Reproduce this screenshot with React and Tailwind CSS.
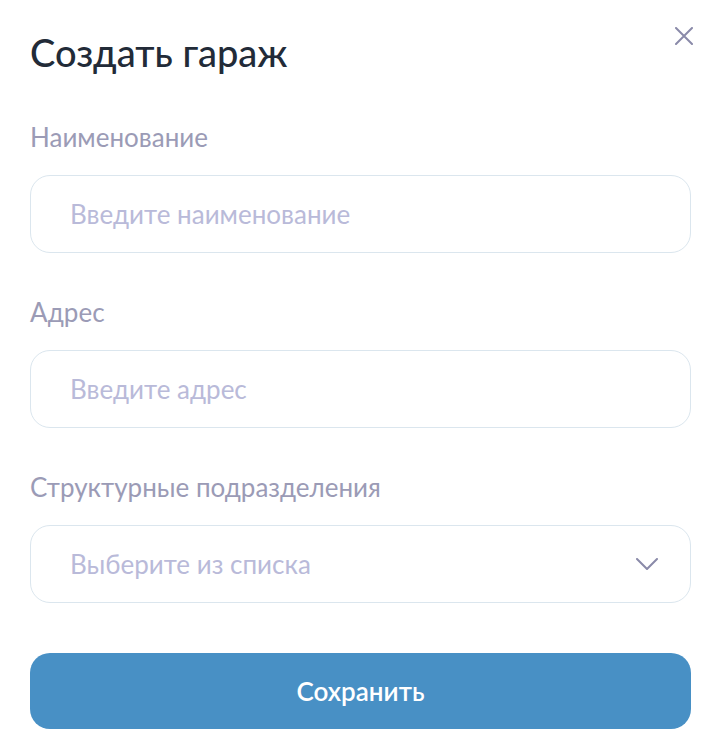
import React from 'react';

const Field = ({ label, placeholder, select }) => (
  <div className="flex flex-col">
    <label className="text-[26px] leading-8 text-[#9b9bb6] mb-[22px]">{label}</label>
    <div className="relative flex items-center h-[78px] rounded-[20px] border border-[#dbe6ee] bg-white pl-[39px] pr-[70px]">
      <input
        type="text"
        placeholder={placeholder}
        readOnly={select}
        className="w-full bg-transparent outline-none text-[26px] text-[#2b3340] placeholder:text-[#b9bad9]"
      />
      {select && (
        <svg className="absolute right-[32px] w-[22px] h-[12px]" viewBox="0 0 22 12" fill="none" stroke="#8a8aa9" strokeWidth="2" strokeLinecap="round" strokeLinejoin="round">
          <path d="M1 1l10 10 10-10" />
        </svg>
      )}
    </div>
  </div>
);

export default function App() {
  return (
    <div className="w-[718px] h-[754px] bg-white font-['Lato','Noto_Sans',sans-serif] pl-[30px] pr-[27px] pt-[29px]">
      <div className="relative">
        <h1 className="text-[38px] font-medium text-[#222b38] leading-[46px]">Создать гараж</h1>
        <button className="absolute right-[-2px] top-[-2px] w-[18px] h-[18px]">
          <svg viewBox="0 0 18 18" className="w-[18px] h-[18px]" fill="none" stroke="#8a8aa9" strokeWidth="2" strokeLinecap="round">
            <path d="M1 1l16 16M17 1L1 17" />
          </svg>
        </button>
      </div>
      <div className="flex flex-col gap-[43px] mt-[46px]">
        <Field label="Наименование" placeholder="Введите наименование" />
        <Field label="Адрес" placeholder="Введите адрес" />
        <Field label="Структурные подразделения" placeholder="Выберите из списка" select />
      </div>
      <button className="mt-[50px] w-full h-[76px] rounded-[20px] bg-[#4890c5] text-white text-[26px] font-semibold">
        Сохранить
      </button>
    </div>
  );
}
